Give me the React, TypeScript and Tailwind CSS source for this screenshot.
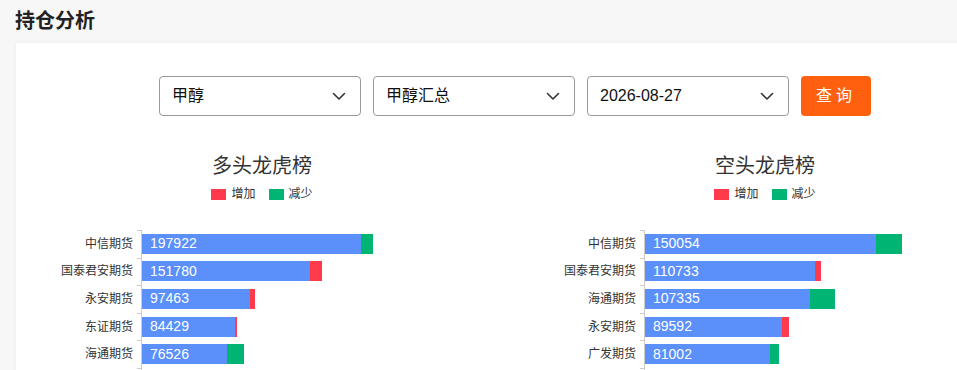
import React from 'react';

type Row = { name: string; value: number; base: number; delta: number; kind: 'up' | 'down' };

const longRows: Row[] = [
  { name: '中信期货', value: 197922, base: 219, delta: 12, kind: 'down' },
  { name: '国泰君安期货', value: 151780, base: 168, delta: 12, kind: 'up' },
  { name: '永安期货', value: 97463, base: 108, delta: 5, kind: 'up' },
  { name: '东证期货', value: 84429, base: 93, delta: 2, kind: 'up' },
  { name: '海通期货', value: 76526, base: 85, delta: 17, kind: 'down' },
];

const shortRows: Row[] = [
  { name: '中信期货', value: 150054, base: 231, delta: 26, kind: 'down' },
  { name: '国泰君安期货', value: 110733, base: 170, delta: 6, kind: 'up' },
  { name: '海通期货', value: 107335, base: 165, delta: 25, kind: 'down' },
  { name: '永安期货', value: 89592, base: 137, delta: 7, kind: 'up' },
  { name: '广发期货', value: 81002, base: 125, delta: 9, kind: 'down' },
];

const Chevron = () => (
  <svg width="16" height="16" viewBox="0 0 16 16" fill="none" className="text-[#333]">
    <path d="M2.5 5.5 8 11l5.5-5.5" stroke="currentColor" strokeWidth="1.6" strokeLinecap="round" strokeLinejoin="round" />
  </svg>
);

const Select = ({ label }: { label: string }) => (
  <div className="flex h-[40px] w-[202px] items-center justify-between rounded-[4px] border border-[#9a9a9a] bg-white pl-[12px] pr-[13px] text-[16px] text-[#111]">
    <span>{label}</span>
    <Chevron />
  </div>
);

const Legend = () => (
  <div className="flex items-center justify-center gap-[13px] text-[12px] text-[#333]">
    <div className="flex items-center gap-[5px]">
      <span className="inline-block h-[11px] w-[15px] bg-[#ff3a4d]" />
      <span>增加</span>
    </div>
    <div className="flex items-center gap-[5px]">
      <span className="inline-block h-[11px] w-[15px] bg-[#00b574]" />
      <span>减少</span>
    </div>
  </div>
);

const Chart = ({ title, rows }: { title: string; rows: Row[] }) => (
  <div className="w-[492px] shrink-0">
    <div className="mt-[36px] text-center text-[20px] leading-[28px] text-[#333]">{title}</div>
    <div className="mt-[5px]">
      <Legend />
    </div>
    <div className="mt-[27px]">
      {rows.map((r) => (
        <div key={r.name} className="flex h-[27.6px]">
          <div className="flex w-[121px] items-center justify-end pr-[4px] text-[12px] text-[#333]">{r.name}</div>
          <div className="w-[4px] border-t border-[#ccc]" />
          <div className="flex flex-1 items-center border-l border-[#ccc]">
            <div className="flex h-[20px]">
              <div
                className="flex items-center bg-[#5b8ff9] pl-[8px] text-[14px] text-white"
                style={{ width: r.base }}
              >
                {r.value}
              </div>
              <div
                className={r.kind === 'up' ? 'bg-[#ff3a4d]' : 'bg-[#00b574]'}
                style={{ width: r.delta }}
              />
            </div>
          </div>
        </div>
      ))}
      <div className="flex h-[8px]">
        <div className="w-[121px]" />
        <div className="w-[4px] border-t border-[#ccc]" />
        <div className="border-l border-[#ccc]" />
      </div>
    </div>
  </div>
);

export default function App() {
  return (
    <div
      className="h-[370px] w-[957px] overflow-hidden bg-[#f7f7f7]"
      style={{ fontFamily: '"Liberation Sans", "Noto Sans CJK SC", sans-serif' }}
    >
      <h1 className="pl-[15px] pt-[8px] text-[20px] font-bold leading-[26px] text-[#222]">持仓分析</h1>
      <div className="ml-[16px] mt-[9px] w-[1000px] bg-white pb-[20px] shadow-[0_0_6px_rgba(0,0,0,0.04)]">
        <div className="flex gap-[12px] pl-[143px] pt-[33px]">
          <Select label="甲醇" />
          <Select label="甲醇汇总" />
          <Select label="2026-08-27" />
          <button className="h-[40px] w-[70px] rounded-[4px] bg-[#ff6010] text-[16px] tracking-[4px] text-white">
            查询
          </button>
        </div>
        <div className="flex gap-[11px]">
          <Chart title="多头龙虎榜" rows={longRows} />
          <Chart title="空头龙虎榜" rows={shortRows} />
        </div>
      </div>
    </div>
  );
}
